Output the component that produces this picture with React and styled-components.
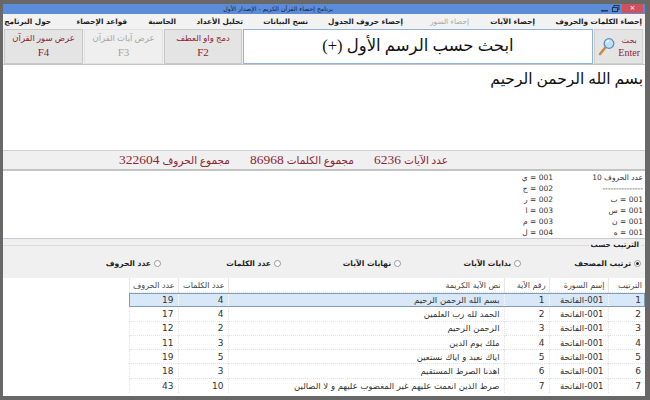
import styled, { createGlobalStyle } from 'styled-components';

const SANS = '"DejaVu Sans", "Liberation Sans", sans-serif';
const SERIF = '"Liberation Serif", "DejaVu Sans", serif';
const RED = '#8c2530';

const GlobalStyle = createGlobalStyle`
  html, body {
    margin: 0;
    padding: 0;
    background: #686868;
  }
`;

const Screen = styled.div`
  width: 650px;
  height: 400px;
  box-sizing: border-box;
  padding: 4px 5px 4px 3px;
  overflow: hidden;
  font-family: ${SANS};
`;

const Win = styled.div`
  display: flex;
  flex-direction: column;
  height: 100%;
  background: #f0f0f0;
  direction: rtl;
`;

const TitleBar = styled.div`
  position: relative;
  flex: 0 0 10px;
  height: 10px;
  padding-right: 312px;
  background: #5c8cd8;
  color: #14233c;
  font-size: 6.2px;
  line-height: 10px;
  white-space: nowrap;
`;

const WinButtons = styled.div`
  position: absolute;
  top: 0;
  right: 2px;
  display: flex;
  align-items: center;
  height: 9px;
`;

const CloseBtn = styled.div`
  width: 21px;
  height: 9px;
  background: #d0505c;
  color: #fff;
  font-size: 7px;
  line-height: 9px;
  text-align: center;
`;

const WinGlyph = styled.div`
  width: 12px;
  height: 9px;
  display: flex;
  align-items: center;
  justify-content: center;
`;

const Menu = styled.nav`
  flex: 0 0 15px;
  display: flex;
  align-items: center;
  padding: 0 3px 0 0;
  background: #f2f2f2;
  height: 15px;
`;

const MenuItem = styled.span`
  flex: 0 0 ${p => p.$w}px;
  min-width: 0;
  margin-left: ${p => p.$gap}px;
  font-size: 7.3px;
  white-space: nowrap;
  color: ${p => (p.$off ? '#a8a8a8' : '#1c1c1c')};
  font-weight: ${p => (p.$off ? 'normal' : 'bold')};
`;

const Toolbar = styled.div`
  flex: 0 0 35px;
  display: flex;
  gap: 1px;
  padding: 0 2px 0 2px;
  height: 35px;
  box-sizing: border-box;
`;

const SearchButton = styled.button`
  flex: 0 0 49px;
  display: flex;
  align-items: center;
  justify-content: space-between;
  padding: 0 2px 0 3px;
  direction: rtl;
  background: #e4e4e4;
  border: 1px solid #d0d0d0;
  color: ${RED};
  font-family: ${SERIF};
`;

const SearchLabel = styled.span`
  display: flex;
  flex-direction: column;
  align-items: center;
  font-size: 10px;
  line-height: 12px;
`;

const SearchWord = styled.span`
  font-size: 8px;
`;

const SearchBox = styled.div`
  flex: 0 0 350px;
  box-sizing: border-box;
  border: 1px solid #8fb4dc;
  background: #fff;
  color: #111;
  font-family: ${SERIF};
  font-size: 16.5px;
  line-height: 31px;
  text-align: center;
  white-space: nowrap;
`;

const ActionButton = styled.button`
  flex: 0 0 ${p => p.$w}px;
  display: flex;
  flex-direction: column;
  align-items: center;
  justify-content: center;
  box-sizing: border-box;
  padding: 0 0 4px;
  background: ${p => (p.$off ? '#efefef' : '#e4e4e4')};
  border: 1px solid ${p => (p.$off ? '#e2e2e2' : '#c8c8c8')};
  color: ${p => (p.$off ? '#a6a6a6' : RED)};
  font-family: ${SERIF};
  line-height: 14px;
  direction: rtl;
`;

const ActionLabel = styled.span`
  font-size: 8.5px;
  white-space: nowrap;
`;

const ActionKey = styled.span`
  font-size: 11px;
`;

const QuranText = styled.div`
  flex: 0 0 86px;
  box-sizing: border-box;
  background: #fff;
  border-top: 1px solid #c6c6c6;
  padding: 1px 2px 0 0;
  color: #111;
  font-family: ${SERIF};
  font-size: 15.5px;
  line-height: 26px;
`;

const Stats = styled.div`
  flex: 0 0 21px;
  box-sizing: border-box;
  display: flex;
  align-items: center;
  padding-right: 197px;
  border-top: 1px solid #cfcfd8;
  border-bottom: 2px solid #c4c4c4;
  background: #f0f0f0;
  color: ${RED};
  font-family: ${SERIF};
  font-size: 13.5px;
  white-space: nowrap;
`;

const Stat = styled.span`
  display: flex;
  align-items: center;
  gap: 3px;
  margin-left: 20px;
`;

const StatLabel = styled.span`
  font-size: 10.5px;
`;

const Letters = styled.div`
  flex: 0 0 67px;
  display: flex;
  background: #fff;
  padding: 1px 2px 0 0;
  font-size: 7.5px;
  line-height: 11px;
  color: #333;
  border-bottom: 1px solid #c8c8d0;
  box-sizing: border-box;
`;

const LetterCol = styled.div`
  flex: 0 0 90px;
`;

const Line = styled.div`
  white-space: nowrap;
`;

const SortGroup = styled.fieldset`
  flex: 0 0 38px;
  box-sizing: border-box;
  margin: 0;
  padding: 0;
  border: none;
  border-top: 1px solid #dcdcdc;
  margin-top: 1px;
`;

const SortLegend = styled.legend`
  margin-right: 4px;
  padding: 0 2px;
  font-size: 7.2px;
  font-weight: bold;
  line-height: 10px;
  color: #222;
`;

const SortRow = styled.div`
  display: grid;
  grid-template-columns: repeat(5, 120px);
  padding: 9px 4px 0 0;
`;

const SortOption = styled.label`
  display: flex;
  align-items: center;
  gap: 3px;
  font-size: 7.6px;
  font-weight: bold;
  color: #222;
  white-space: nowrap;
`;

const Radio = styled.span`
  position: relative;
  flex: 0 0 7px;
  width: 7px;
  height: 7px;
  box-sizing: border-box;
  border: 1px solid #9a9a9a;
  border-radius: 50%;
  background: #fff;

  &::after {
    content: '';
    display: ${p => (p.$on ? 'block' : 'none')};
    position: absolute;
    inset: 1px;
    border-radius: 50%;
    background: #222;
  }
`;

const TableArea = styled.div`
  flex: 1;
  background: #fff;
  overflow: hidden;
`;

const Grid = styled.table`
  width: 516px;
  table-layout: fixed;
  border-collapse: collapse;
  font-size: 9px;
  color: #333;
`;

const Col = styled.col`
  width: ${p => p.$w}px;
`;

const Head = styled.th`
  height: 14px;
  padding: 0 3px;
  background: #fff;
  border-left: 1px solid #e6e6e6;
  font-size: 8px;
  font-weight: normal;
  color: #444;
  text-align: right;
  white-space: nowrap;
`;

const Cell = styled.td`
  height: 14.3px;
  padding: 0 4px;
  box-sizing: border-box;
  border-top: 1px dotted #e4e4e4;
  border-left: 1px dotted #e4e4e4;
  text-align: right;
  white-space: nowrap;
  overflow: hidden;
  font-size: ${p => (p.$num ? 9 : 8.5)}px;
`;

const Row = styled.tr`
  background: ${p => (p.$selected ? '#d8e8f8' : '#fff')};
  outline: ${p => (p.$selected ? '1px solid #7f9db9' : 'none')};
  outline-offset: -1px;
`;

const menuItems = [
  { label: 'إحصاء الكلمات والحروف', w: 84, gap: 23 },
  { label: 'إحصاء الآيات', w: 43, gap: 23 },
  { label: 'إحصاء السور', w: 43, gap: 23, off: true },
  { label: 'إحصاء حروف الجدول', w: 71, gap: 24 },
  { label: 'نسخ البيانات', w: 43, gap: 22 },
  { label: 'تحليل الأعداد', w: 45, gap: 22 },
  { label: 'الحاسبة', w: 27, gap: 22 },
  { label: 'قواعد الإحصاء', w: 50, gap: 26 },
  { label: 'حول البرنامج', w: 43, gap: 0 },
];

const firstLetters = ['عدد الحروف 10', '---------------', '001 = ب', '001 = س', '001 = ن', '001 = ه'];
const secondLetters = ['001 = ي', '002 = ح', '002 = ر', '003 = ا', '003 = م', '004 = ل'];
const sortOptions = ['ترتيب المصحف', 'بدايات الآيات', 'نهايات الآيات', 'عدد الكلمات', 'عدد الحروف'];
const colWidths = [37, 59, 45, 276, 50, 49];
const headers = ['الترتيب', 'إسم السورة', 'رقم الآية', 'نص الآية الكريمة', 'عدد الكلمات', 'عدد الحروف'];
const stats = [
  ['عدد الآيات', 6236],
  ['مجموع الكلمات', 86968],
  ['مجموع الحروف', 322604],
];
const actions = [
  { label: 'دمج واو العطف', key: 'F2', w: 78 },
  { label: 'عرض آيات القرآن', key: 'F3', w: 79, off: true },
  { label: 'عرض سور القرآن', key: 'F4', w: 79 },
];

const verses = [
  ['بسم الله الرحمن الرحيم', 4, 19],
  ['الحمد لله رب العلمين', 4, 17],
  ['الرحمن الرحيم', 2, 12],
  ['ملك يوم الدين', 3, 11],
  ['اياك نعبد و اياك نستعين', 5, 19],
  ['اهدنا الصرط المستقيم', 3, 18],
  ['صرط الذين انعمت عليهم غير المغضوب عليهم و لا الضالين', 10, 43],
];

const SearchIcon = () => (
  <svg width="17" height="19" viewBox="0 0 17 19">
    <path d="M7 11 L2 17" stroke="#c98a3c" strokeWidth="2.6" strokeLinecap="round" />
    <circle cx="11" cy="6.5" r="4.8" fill="#bfe0f6" stroke="#5d8fb8" strokeWidth="1.3" />
    <path d="M8.6 5.5 A3 3 0 0 1 11 3.6" stroke="#fff" strokeWidth="1.2" fill="none" />
  </svg>
);

const App = () => (
  <Screen>
    <GlobalStyle />
    <Win>
      <TitleBar>
        برنامج إحصاء القرآن الكريم - الإصدار الأول
        <WinButtons>
          <CloseBtn>×</CloseBtn>
          <WinGlyph>
            <svg width="8" height="7" viewBox="0 0 8 7">
              <rect x="2" y="0.5" width="5" height="4" fill="none" stroke="#22344f" />
              <rect x="0.5" y="2.5" width="5" height="4" fill="#5c8cd8" stroke="#22344f" />
            </svg>
          </WinGlyph>
          <WinGlyph>
            <svg width="7" height="7" viewBox="0 0 7 7">
              <rect x="0" y="5" width="7" height="1.5" fill="#22344f" />
            </svg>
          </WinGlyph>
        </WinButtons>
      </TitleBar>
      <Menu>
        {menuItems.map(item => (
          <MenuItem key={item.label} $w={item.w} $gap={item.gap} $off={item.off}>
            {item.label}
          </MenuItem>
        ))}
      </Menu>
      <Toolbar>
        <SearchButton>
          <SearchLabel>
            <SearchWord>بحث</SearchWord>
            <span>Enter</span>
          </SearchLabel>
          <SearchIcon />
        </SearchButton>
        <SearchBox>ابحث حسب الرسم الأول (+)</SearchBox>
        {actions.map(a => (
          <ActionButton key={a.key} $w={a.w} $off={a.off}>
            <ActionLabel>{a.label}</ActionLabel>
            <ActionKey>{a.key}</ActionKey>
          </ActionButton>
        ))}
      </Toolbar>
      <QuranText>بسم الله الرحمن الرحيم</QuranText>
      <Stats>
        {stats.map(([label, value]) => (
          <Stat key={label}>
            <StatLabel>{label}</StatLabel>
            {value}
          </Stat>
        ))}
      </Stats>
      <Letters>
        <LetterCol>
          {firstLetters.map(line => (
            <Line key={line}>{line}</Line>
          ))}
        </LetterCol>
        <LetterCol>
          {secondLetters.map(line => (
            <Line key={line}>{line}</Line>
          ))}
        </LetterCol>
      </Letters>
      <SortGroup>
        <SortLegend>الترتيب حسب</SortLegend>
        <SortRow>
          {sortOptions.map((label, i) => (
            <SortOption key={label}>
              <Radio $on={i === 0} />
              {label}
            </SortOption>
          ))}
        </SortRow>
      </SortGroup>
      <TableArea>
        <Grid>
          <colgroup>
            {colWidths.map((w, i) => (
              <Col key={i} $w={w} />
            ))}
          </colgroup>
          <thead>
            <tr>
              {headers.map(h => (
                <Head key={h}>{h}</Head>
              ))}
            </tr>
          </thead>
          <tbody>
            {verses.map(([text, words, letters], i) => (
              <Row key={text} $selected={i === 0}>
                <Cell $num>{i + 1}</Cell>
                <Cell>001-الفاتحة</Cell>
                <Cell $num>{i + 1}</Cell>
                <Cell>{text}</Cell>
                <Cell $num>{words}</Cell>
                <Cell $num>{letters}</Cell>
              </Row>
            ))}
          </tbody>
        </Grid>
      </TableArea>
    </Win>
  </Screen>
);

export default App;
